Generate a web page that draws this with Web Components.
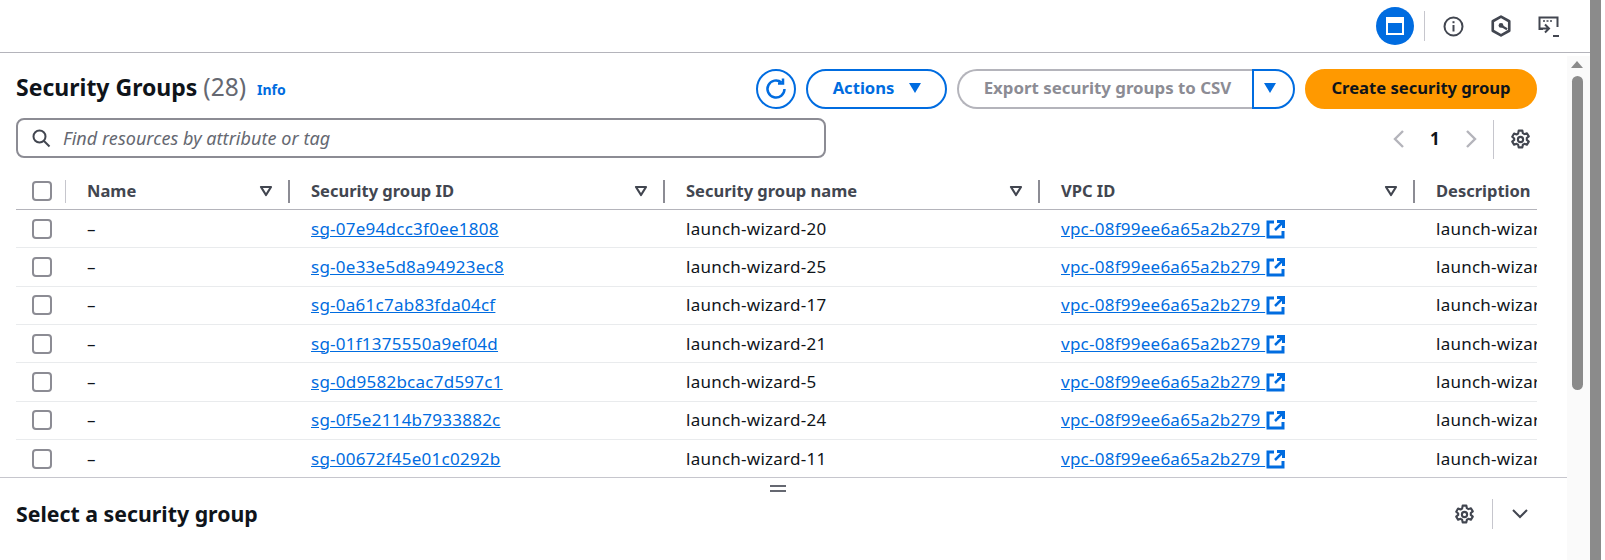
<!DOCTYPE html>
<html>
<head>
<meta charset="utf-8">
<title>Security Groups</title>
<style>
  html, body { margin: 0; height: 100%; background: #fff; overflow: hidden; }
  body { font-family: "Noto Sans", "Open Sans", sans-serif; color: #0f141a; }
</style>
</head>
<body>
<sg-app>
  <sg-topbar slot="top"></sg-topbar>
  <sg-list slot="list"></sg-list>
  <sg-detail slot="detail"></sg-detail>
</sg-app>
<script>
const { customElements, HTMLElement } = window

const GEAR = `<svg width="21" height="21" viewBox="0 0 16 16" fill="none" stroke="#424650" stroke-width="1.600" stroke-linejoin="round"><path d="M6.600 1.200h2.800l.4 2 1.200.7 1.900-.7 1.400 2.400-1.500 1.300v1.400l1.500 1.300-1.400 2.400-1.900-.7-1.200.7-.4 2H6.600l-.4-2-1.200-.7-1.900.7-1.400-2.400 1.500-1.300V7.200L1.700 5.900l1.400-2.400 1.900.7 1.200-.7z"/><circle cx="8" cy="8" r="2"/></svg>`

const caret = (color, w = 14) => `<svg width="${w}" height="${w}" viewBox="0 0 14 14"><path d="M1 2h12L7 12z" fill="${color}"/></svg>`

const shellTemplate = document.createElement('template')
shellTemplate.innerHTML = `
  <style>
    :host { display: flex; width: 1605px; height: 560px; overflow: hidden; }
    .main { width: 1590px; display: flex; flex-direction: column; }
    .body { flex: 1; display: flex; min-height: 0; }
    .panes { width: 1567px; display: flex; flex-direction: column; }
    .track { width: 23px; margin-top: 3px; padding-right: 3px; box-sizing: border-box; background: #fafafa; display: flex; flex-direction: column; align-items: center; }
    .arrow { width: 0; height: 0; margin-top: 5px; border: 6.5px solid transparent; border-top: 0; border-bottom: 7px solid #8b8b8b; }
    .thumb { width: 11px; height: 314px; margin-top: 8px; border-radius: 6px; background: #8b8b8b; }
    .outer { width: 11px; background: #8b8b8b; }
  </style>
  <div class="main">
    <slot name="top"></slot>
    <div class="body">
      <div class="panes">
        <slot name="list"></slot>
        <slot name="detail"></slot>
      </div>
      <div class="track"><div class="arrow"></div><div class="thumb"></div></div>
    </div>
  </div>
  <div class="outer"></div>
`

class SgApp extends HTMLElement {
  constructor () {
    super()
    this.attachShadow({mode: 'open'})
    this.shadowRoot.appendChild(shellTemplate.content.cloneNode(true))
  }
}

const topbarTemplate = document.createElement('template')
topbarTemplate.innerHTML = `
  <style>
    :host { display: flex; align-items: center; justify-content: flex-end; height: 52px; flex: none; box-sizing: content-box; border-bottom: 1px solid #b4b4bb; padding-right: 29px; }
    .active { width: 38px; height: 38px; border-radius: 50%; background: #006ce0; display: flex; align-items: center; justify-content: center; }
    .sep { width: 1px; height: 30px; background: #c6c6cd; margin: 0 16px 0 10px; }
    .icon { display: flex; width: 24px; height: 24px; align-items: center; justify-content: center; margin-right: 24px; }
    .icon:last-child { margin: 2px 0 0; }
  </style>
  <div class="active">
    <svg width="22" height="22" viewBox="0 0 22 22"><path d="M3 3h16v16H3z" fill="none" stroke="#fff" stroke-width="2"/><path d="M3 3h16v5H3z" fill="#fff"/></svg>
  </div>
  <div class="sep"></div>
  <div class="icon">
    <svg width="21" height="21" viewBox="0 0 21 21" fill="none" stroke="#424650" stroke-width="2"><circle cx="10.500" cy="10.500" r="9"/><path d="M10.500 9v6.500"/><path d="M10.500 5.200v2"/></svg>
  </div>
  <div class="icon">
    <svg width="22" height="22" viewBox="0 0 20 20" fill="none" stroke="#424650" stroke-width="2.400" stroke-linejoin="round"><path d="M10 1.500l7.500 4.200v8.600L10 18.500l-7.500-4.200V5.700z"/><circle cx="10" cy="9.500" r="2.200" fill="#424650" stroke="none"/><path d="M10.500 10l5 3" stroke-width="2"/></svg>
  </div>
  <div class="icon">
    <svg width="22" height="22" viewBox="0 0 22 22" fill="none" stroke="#424650" stroke-width="2"><path d="M5 13H1.500V1.500h18V11"/><path d="M5 5h2M8.500 5h2M12 5h2" stroke-width="1.600"/><path d="M7 8.500l4 4-4 4M1.500 12.500h9"/><path d="M15 20h6"/></svg>
  </div>
`

class SgTopbar extends HTMLElement {
  constructor () {
    super()
    this.attachShadow({mode: 'open'})
    this.shadowRoot.appendChild(topbarTemplate.content.cloneNode(true))
  }
}

const buttonTemplate = document.createElement('template')
buttonTemplate.innerHTML = `
  <style>
    :host { display: inline-flex; align-items: center; justify-content: center; box-sizing: border-box; height: 40px; padding-bottom: 1px; border: 2px solid #006ce0; border-radius: 21px; color: #006ce0; font: 700 16.600px/22px "Noto Sans", sans-serif; background: #fff; }
    :host([variant=primary]) { background: #f90; border-color: #f90; color: #0f141a; }
  </style>
  <slot></slot>
`

class SgButton extends HTMLElement {
  constructor () {
    super()
    this.attachShadow({mode: 'open'})
    this.shadowRoot.appendChild(buttonTemplate.content.cloneNode(true))
  }
}

const checkTemplate = document.createElement('template')
checkTemplate.innerHTML = `
  <style>
    :host { display: block; box-sizing: border-box; width: 20px; height: 20px; border: 2px solid #8c8c94; border-radius: 4px; background: #fff; }
  </style>
`

class SgCheckbox extends HTMLElement {
  constructor () {
    super()
    this.attachShadow({mode: 'open'})
    this.shadowRoot.appendChild(checkTemplate.content.cloneNode(true))
  }
}

const ROWS = [
  ['sg-07e94dcc3f0ee1808', 'launch-wizard-20'],
  ['sg-0e33e5d8a94923ec8', 'launch-wizard-25'],
  ['sg-0a61c7ab83fda04cf', 'launch-wizard-17'],
  ['sg-01f1375550a9ef04d', 'launch-wizard-21'],
  ['sg-0d9582bcac7d597c1', 'launch-wizard-5'],
  ['sg-0f5e2114b7933882c', 'launch-wizard-24'],
  ['sg-00672f45e01c0292b', 'launch-wizard-11']
]
const VPC = 'vpc-08f99ee6a65a2b279'
const HEADERS = ['Name', 'Security group ID', 'Security group name', 'VPC ID']

const listTemplate = document.createElement('template')
listTemplate.innerHTML = `
  <style>
    :host { display: block; height: 425px; flex: none; box-sizing: border-box; padding: 15px 30px 0 16px; border-bottom: 1px solid #c6c6cd; overflow: hidden; font-size: 17px; line-height: 22px; letter-spacing: .25px; }
    .head { display: flex; align-items: center; height: 41px; letter-spacing: 0; }
    h1 { margin: 0 0 4px; font-size: 23px; line-height: 30px; font-weight: 700; }
    h1 span { font-size: 24.500px; font-weight: 400; color: #656871; }
    .info { margin-left: 11px; padding-top: 3px; font-size: 14px; font-weight: 700; color: #006ce0; }
    .actions { margin-left: auto; display: flex; gap: 10px; }
    .refresh { width: 40px; padding-bottom: 0; }
    .menu { width: 141px; gap: 14px; padding-left: 2px; }
    .split { display: flex; }
    .export { width: 295px; border-color: #b4b4bb; border-right: 0; border-radius: 21px 0 0 21px; color: #8c8c94; font-size: 16.850px; padding-left: 4px; }
    .drop { width: 43px; border-radius: 0 21px 21px 0; padding-right: 7px; }
    .create { width: 232px; }
    .tools { display: flex; align-items: center; margin-top: 9px; height: 40px; }
    .search { box-sizing: border-box; width: 810px; height: 40px; border: 2px solid #8c8c94; border-radius: 8px; display: flex; align-items: center; padding-left: 13px; gap: 12px; font-size: 18px; letter-spacing: .05px; font-style: italic; color: #656871; }
    .pager { margin-left: auto; display: flex; align-items: center; padding-top: 2px; font-weight: 700; }
    .pager svg { display: block; }
    .pager .num { width: 36px; text-align: center; margin: 0 11px; }
    .sep { width: 1px; height: 39px; background: #c6c6cd; margin: 0 16px 0 13px; }
    .table { width: 1521px; margin-top: 14px; overflow: hidden; }
    .row { display: grid; grid-template-columns: 55px 224px 375px 375px 375px 375px; height: 38.33px; box-sizing: border-box; border-bottom: 1px solid #e9ebed; align-items: center; white-space: nowrap; }
    .row.th { height: 38px; border-bottom-color: #b4b4bb; font-size: 16.500px; letter-spacing: 0; font-weight: 700; color: #424650; }
    .cell { position: relative; padding-left: 16px; display: flex; align-items: center; height: 100%; }
    .th .cell::after { content: ""; position: absolute; right: 5px; top: 8px; bottom: 6px; width: 2px; background: #8c8c94; }
    .th .cell.sel::after { right: 5px; width: 1px; background: #c6c6cd; }
    .th .cell.last::after { display: none; }
    .sort { position: absolute; right: 22px; top: 12px; display: block; }
    a { color: #006ce0; text-decoration: underline; white-space: pre; }
    .ext { margin-left: 1px; display: block; }
  </style>
  <div class="head">
    <h1>Security Groups <span>(28)</span></h1>
    <div class="info">Info</div>
    <div class="actions">
      <sg-button class="refresh">
        <svg width="24" height="24" viewBox="0 0 24 24" fill="none" stroke="#006ce0" stroke-width="2.500"><path d="M20.500 12a8.500 8.500 0 1 1-3-6.500"/><path d="M19 1.500v5h-5"/></svg>
      </sg-button>
      <sg-button class="menu">Actions ${caret('#006ce0')}</sg-button>
      <div class="split">
        <sg-button class="export">Export security groups to CSV</sg-button>
        <sg-button class="drop">${caret('#006ce0')}</sg-button>
      </div>
      <sg-button class="create" variant="primary">Create security group</sg-button>
    </div>
  </div>
  <div class="tools">
    <div class="search">
      <svg width="20" height="20" viewBox="0 0 20 20" fill="none" stroke="#424650" stroke-width="2"><circle cx="8.500" cy="8.500" r="6"/><path d="M13 13l5.500 5.500"/></svg>
      Find resources by attribute or tag
    </div>
    <div class="pager">
      <svg width="16" height="20" viewBox="0 0 16 20" fill="none" stroke="#b4b4bb" stroke-width="2.400"><path d="M13 2L5 10l8 8"/></svg>
      <div class="num">1</div>
      <svg width="16" height="20" viewBox="0 0 16 20" fill="none" stroke="#b4b4bb" stroke-width="2.400"><path d="M3 2l8 8-8 8"/></svg>
      <div class="sep"></div>
      ${GEAR}
      <div style="width:6px"></div>
    </div>
  </div>
  <div class="table"></div>
`

class SgList extends HTMLElement {
  constructor () {
    super()
    this.attachShadow({mode: 'open'})
    this.shadowRoot.appendChild(listTemplate.content.cloneNode(true))
    this._render()
  }

  _render () {
    const sort = `<svg class="sort" width="14" height="14" viewBox="0 0 14 14" fill="none" stroke="#424650" stroke-width="2.200" stroke-linejoin="round"><path d="M2 3h10L7 11z"/></svg>`
    const ext = `<svg class="ext" width="20" height="20" viewBox="0 0 20 20" fill="none" stroke="#006ce0" stroke-width="3"><path d="M8 3H2v15h15v-6"/><path d="M9 11l7-7" stroke-width="2.500"/><path d="M11 2.500h6.500V9"/></svg>`
    const head = `<div class="row th"><div class="cell sel"><sg-checkbox></sg-checkbox></div>${HEADERS.map(h => `<div class="cell">${h}${sort}</div>`).join('')}<div class="cell last">Description</div></div>`
    const rows = ROWS.map(([id, name]) => `
      <div class="row">
        <div class="cell sel"><sg-checkbox></sg-checkbox></div>
        <div class="cell">–</div>
        <div class="cell"><a>${id}</a></div>
        <div class="cell">${name}</div>
        <div class="cell"><a>${VPC} </a>${ext}</div>
        <div class="cell">${name}</div>
      </div>`).join('')
    this.shadowRoot.querySelector('.table').innerHTML = head + rows
  }
}

const detailTemplate = document.createElement('template')
detailTemplate.innerHTML = `
  <style>
    :host { display: block; flex: 1; font-size: 16px; }
    .grip { display: flex; justify-content: center; padding: 6px 12px 0 0; }
    .bar { display: flex; align-items: center; height: 30px; margin-top: 5px; padding: 0 38px 0 16px; }
    h2 { margin: 0; font-size: 21.300px; line-height: 28px; font-weight: 700; }
    .gear { margin-left: auto; display: block; height: 21px; }
    .sep { width: 1px; height: 30px; background: #c6c6cd; margin: 0 18px 0 17px; }
  </style>
  <div class="grip">
    <svg width="16" height="10" viewBox="0 0 16 10"><path d="M0 1h16v2H0zM0 6h16v2H0z" fill="#656871"/></svg>
  </div>
  <div class="bar">
    <h2>Select a security group</h2>
    <span class="gear">${GEAR}</span>
    <div class="sep"></div>
    <svg width="18" height="12" viewBox="0 0 18 12" fill="none" stroke="#424650" stroke-width="2"><path d="M2 2l7 7 7-7"/></svg>
  </div>
`

class SgDetail extends HTMLElement {
  constructor () {
    super()
    this.attachShadow({mode: 'open'})
    this.shadowRoot.appendChild(detailTemplate.content.cloneNode(true))
  }
}

customElements.define('sg-button', SgButton)
customElements.define('sg-checkbox', SgCheckbox)
customElements.define('sg-topbar', SgTopbar)
customElements.define('sg-list', SgList)
customElements.define('sg-detail', SgDetail)
customElements.define('sg-app', SgApp)
</script>
</body>
</html>
